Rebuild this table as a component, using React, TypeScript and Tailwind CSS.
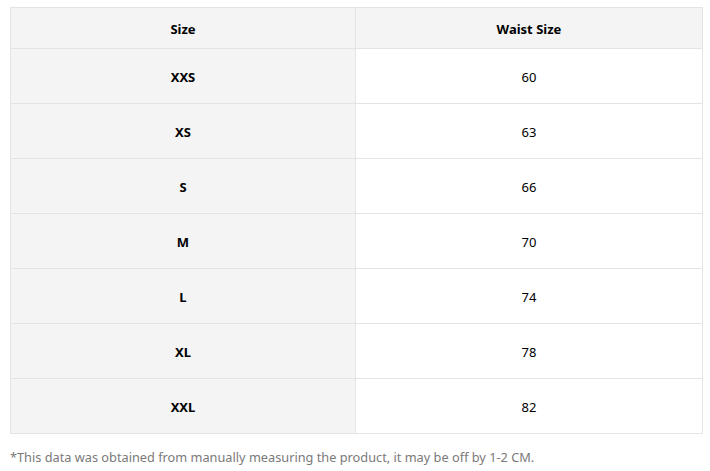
const rows = [
  ['XXS', '60'],
  ['XS', '63'],
  ['S', '66'],
  ['M', '70'],
  ['L', '74'],
  ['XL', '78'],
  ['XXL', '82'],
]

export default function App() {
  return (
    <div className="bg-white w-[710px] h-[471px] pt-[7px] pl-[10px] font-['Noto_Sans',sans-serif] text-black">
      <table className="w-[693px] border-collapse table-fixed text-[13px]">
        <colgroup>
          <col className="w-[345px]" />
          <col />
        </colgroup>
        <thead>
          <tr className="h-[41px] bg-[#f4f4f4]">
            <th className="border border-[#e4e4e4] pt-[4px] font-bold">Size</th>
            <th className="border border-[#e4e4e4] pt-[4px] font-bold">Waist Size</th>
          </tr>
        </thead>
        <tbody>
          {rows.map(([size, waist]) => (
            <tr key={size} className="h-[55px]">
              <td className="border border-[#e4e4e4] bg-[#f4f4f4] pt-[4px] text-center font-bold">{size}</td>
              <td className="border border-[#e4e4e4] pt-[4px] text-center">{waist}</td>
            </tr>
          ))}
        </tbody>
      </table>
      <p className="mt-[14px] text-[12.75px] text-[#7a7a7a]">
        *This data was obtained from manually measuring the product, it may be off by 1-2 CM.
      </p>
    </div>
  )
}
